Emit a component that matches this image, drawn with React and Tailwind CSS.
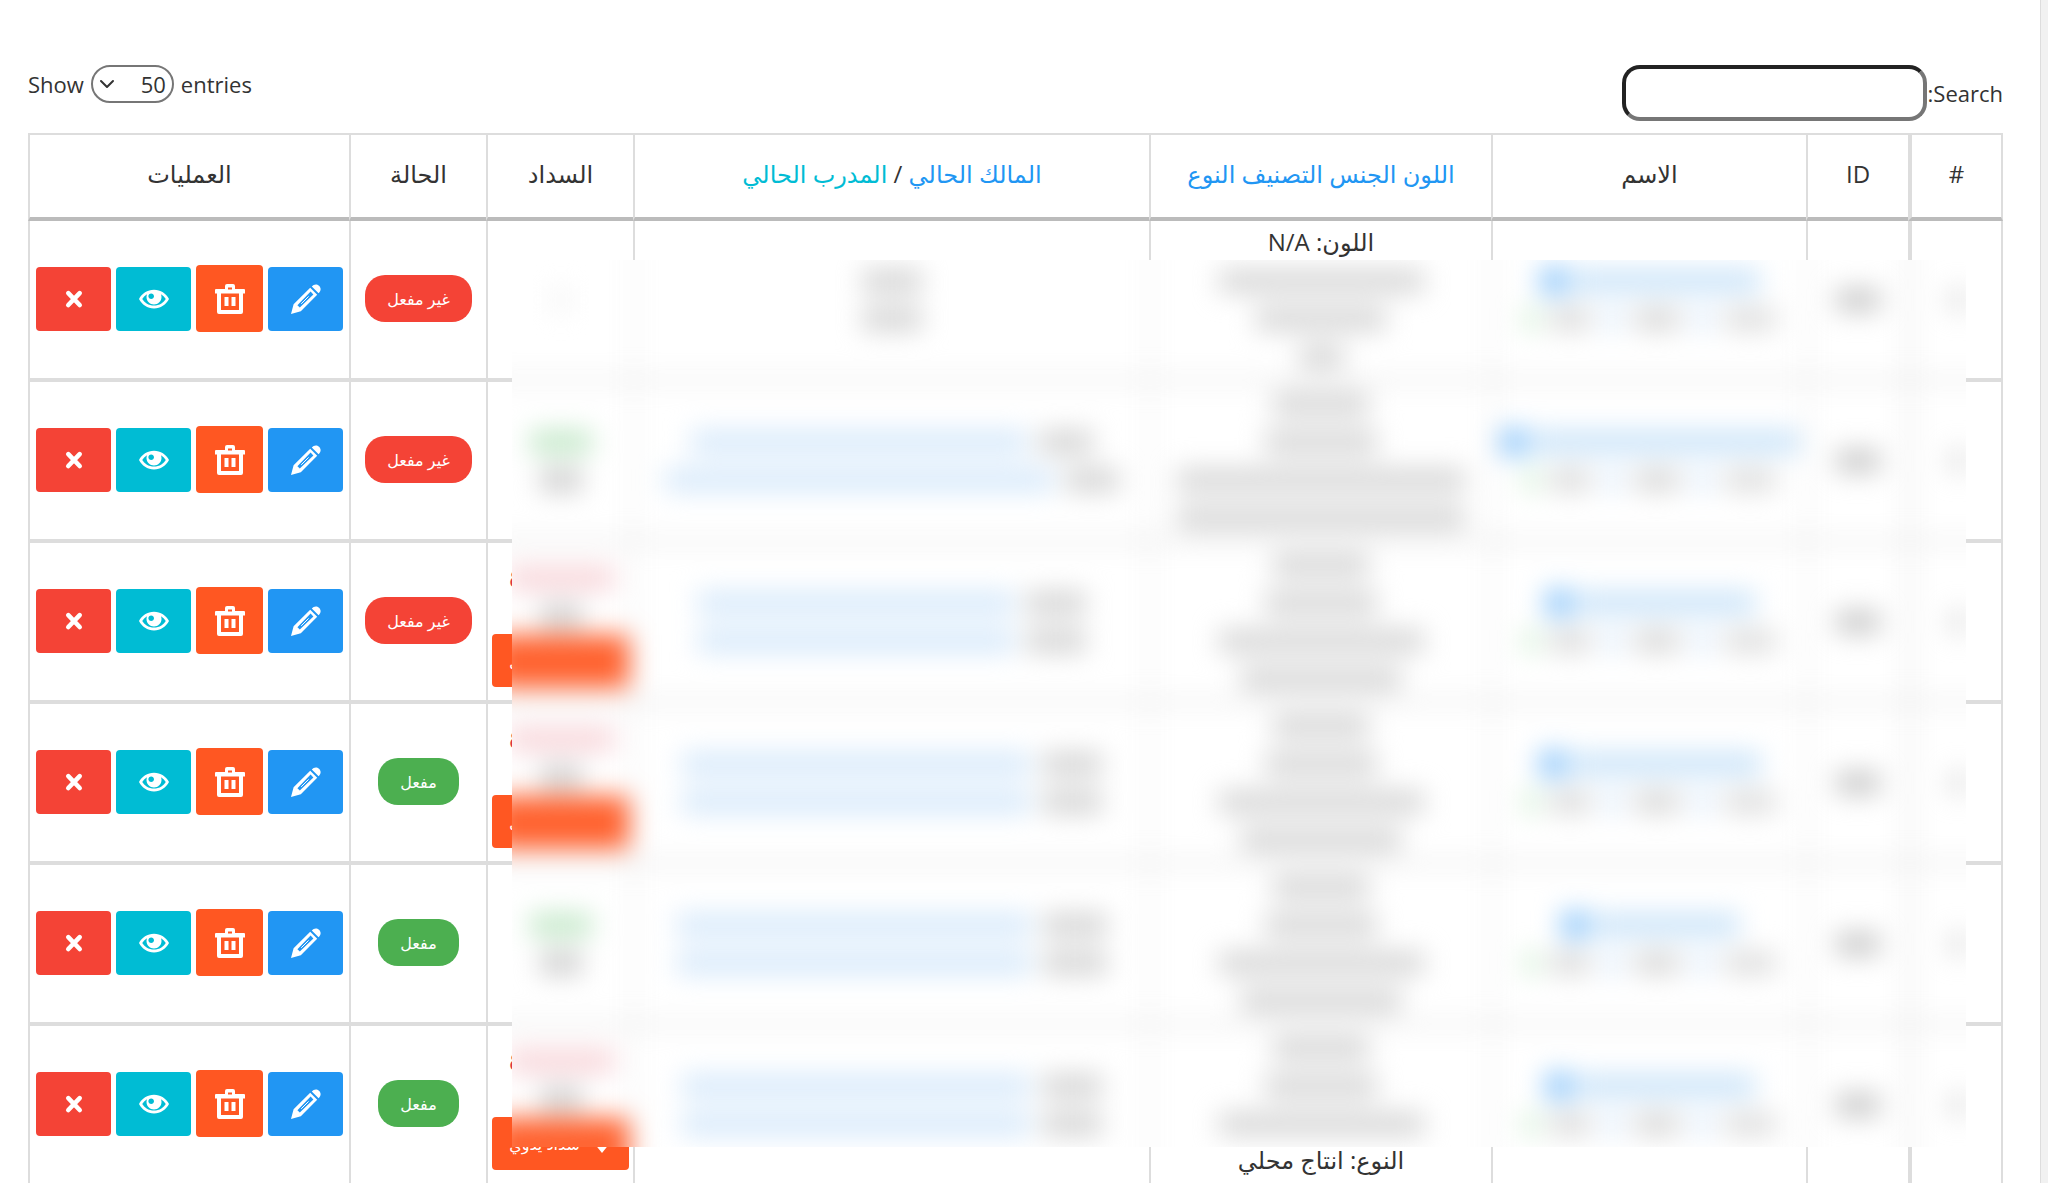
import { useState } from "react";
import { ChevronDown } from "lucide-react";


const ROWS = [
  {
    active: false,
    payment: "none",
    note: "اللون: N/A",
    name: 188,
    details: [0, 205, 130, 45],
    owner: [[60, 0], [60, 0]],
  },
  {
    active: false,
    payment: "paid",
    name: 268,
    details: [96, 112, 288, 288],
    owner: [[54, 336], [54, 388]],
  },
  {
    active: false,
    payment: "unpaid",
    name: 178,
    details: [96, 112, 205, 160],
    owner: [[60, 316], [60, 316]],
  },
  {
    active: true,
    payment: "unpaid",
    name: 190,
    details: [96, 112, 205, 160],
    owner: [[60, 348], [60, 348]],
  },
  {
    active: true,
    payment: "paid",
    name: 146,
    details: [96, 112, 205, 160],
    owner: [[64, 354], [64, 354]],
  },
  {
    active: true,
    payment: "unpaid",
    note: "النوع: انتاج محلي",
    noteAtEnd: true,
    name: 178,
    details: [96, 112, 205, 0],
    owner: [[60, 348], [60, 348]],
  },
];


const TH = "h-[88px] border-t-2 border-b-4 border-l-2 border-t-[#ddd] border-b-[#bbb] border-l-[#ddd] px-2 pb-1 text-center font-normal";

const TD = "h-[161px] border-b-4 border-l-2 border-[#ddd] p-0 pb-0.5 text-center";

const VEIL_CELL = "flex h-[161px] flex-col justify-center border-b-4 border-l-2 border-[#ddd]";


function PencilIcon() {
  return (
    <svg viewBox="0 0 30 30" className="size-[30px]" fill="currentColor" aria-hidden="true">
      <path d="M0 30 2.6 20.2 19.2 3.8 26.2 10.8 9.8 27.2ZM6.400 21.200 8.800 23.600 22.400 10.400 19.600 7.600Z" fillRule="evenodd" />
      <path d="M10.200 19.800 17.600 12.400" stroke="currentColor" strokeWidth="1" />
      <path d="M20.8 2.4C22.6.4 25.6-.6 28 1.8c2.4 2.4 2 5.2-.4 7.4Z" />
    </svg>
  );
}


function TrashIcon() {
  return (
    <svg viewBox="0 0 30 30" className="size-[30px]" fill="currentColor" aria-hidden="true">
      <path d="M10 5V2a2 2 0 0 1 2-2h6a2 2 0 0 1 2 2v3h9a1 1 0 0 1 1 1v3.400h-2V28a2 2 0 0 1-2 2H4a2 2 0 0 1-2-2V9.400H0V6a1 1 0 0 1 1-1ZM13 3.400V5.400h4V3.400ZM6 9.400V26h18V9.400Z" fillRule="evenodd" />
      <path d="M9.500 13h4v9h-4ZM16.500 13h4v9h-4Z" />
    </svg>
  );
}


function EyeIcon() {
  return (
    <svg viewBox="0 0 16 16" className="size-[30px]" fill="currentColor" aria-hidden="true">
      <path d="M8 3c-3.489 0-6.514 2.032-8 5 1.486 2.968 4.511 5 8 5s6.514-2.032 8-5c-1.486-2.968-4.511-5-8-5zM11.945 5.652c0.940 0.600 1.737 1.403 2.335 2.348-0.598 0.946-1.395 1.749-2.335 2.348-1.181 0.753-2.545 1.152-3.944 1.152s-2.763-0.398-3.945-1.152c-0.940-0.600-1.737-1.403-2.335-2.348 0.598-0.946 1.395-1.749 2.335-2.348 0.061-0.039 0.123-0.077 0.185-0.114-0.156 0.427-0.241 0.888-0.241 1.369 0 2.209 1.791 4 4 4s4-1.791 4-4c0-0.481-0.085-0.942-0.241-1.369 0.062 0.037 0.124 0.075 0.185 0.114zM8 6.500c0 0.828-0.672 1.500-1.500 1.500s-1.500-0.672-1.500-1.500 0.672-1.500 1.500-1.500 1.500 0.672 1.500 1.500z" />
    </svg>
  );
}


function CrossIcon() {
  return (
    <svg viewBox="0 0 30 30" className="size-[30px]" fill="none" stroke="currentColor" strokeWidth="4.600" strokeLinecap="round" aria-hidden="true">
      <path d="M9.300 9.200 20.700 21M20.700 9.200 9.300 21" />
    </svg>
  );
}


// Stand-in for a private value
function Bar({ width, className }) {
  return (
    <span
      className={`block h-6 shrink-0 ${className}`}
      style={{ width }}
    />
  );
}


function Line({ children }) {
  return (
    <div className="flex h-[38px] items-center justify-center gap-3">
      {children}
    </div>
  );
}


function VeilPayment({ status }) {

  if (status === "none") {
    return (
      <Line>
        <Bar width={12} className="bg-[#eee]" />
      </Line>
    );
  }

  if (status === "paid") {
    return (
      <>
        <Line>
          <Bar width={62} className="bg-[#c6e9cb]" />
        </Line>
        <Line>
          <Bar width={42} className="bg-[#d0d0d0]" />
        </Line>
      </>
    );
  }

  return (
    <div className="pt-1">
      <Line>
        <Bar width={106} className="bg-[#f8d6da]" />
      </Line>
      <Line>
        <Bar width={42} className="bg-[#d0d0d0]" />
      </Line>
      <div className="mx-1 h-[53px] bg-[#ff622f]" />
    </div>
  );

}


function VeilRow({ row }) {
  return (
    <>

      <div className={`${VEIL_CELL} border-l-4`}>
        <Line>
          <Bar width={14} className="bg-[#d8d8d8]" />
        </Line>
      </div>

      <div className={VEIL_CELL}>
        <Line>
          <Bar width={44} className="bg-[#cccccc]" />
        </Line>
      </div>

      <div className={VEIL_CELL}>
        <Line>
          <span className="flex items-center gap-1">
            <Bar width={row.name} className="bg-[#cde5f9]" />
            <span className="block size-7 bg-[#98ccfb]" />
          </span>
        </Line>
        <Line>
          <Bar width={52} className="bg-[#e0e0e0]" />
          <Bar width={20} className="bg-[#e3effc]" />
          <Bar width={46} className="bg-[#dbdbdb]" />
          <Bar width={20} className="bg-[#e3effc]" />
          <Bar width={40} className="bg-[#dddddd]" />
          <Bar width={14} className="bg-[#d2f0d5]" />
        </Line>
      </div>

      <div className={VEIL_CELL}>
        {row.details.map((width, i) => (
          <Line key={i}>
            <Bar width={width} className="bg-[#d8d8d8]" />
          </Line>
        ))}
      </div>

      <div className={VEIL_CELL}>
        {row.owner.map(([label, value], i) => (
          <Line key={i}>
            <Bar width={label} className="bg-[#d6d6d6]" />
            {value > 0 && <Bar width={value} className="bg-[#d8eafb]" />}
          </Line>
        ))}
      </div>

      <div className={VEIL_CELL}>
        <VeilPayment status={row.payment} />
      </div>

    </>
  );
}


function Row({ row }) {
  return (
    <tr>

      <td className={`${TD} border-r-2 border-l-4`} />
      <td className={TD} />
      <td className={TD} />

      <td className={`${TD} leading-[38px] ${row.noteAtEnd ? "align-bottom" : "align-top"}`}>
        {row.note && <div className="py-0.5">{row.note}</div>}
      </td>

      <td className={TD} />

      <td className={TD}>
        {row.payment === "unpaid" && (
          <div className="flex flex-col">
            <span className="h-20 whitespace-nowrap leading-[38px] text-[#dc3545]">غير مدفوع</span>
            <button
              type="button"
              className="mx-1 flex h-[53px] items-center justify-center gap-3 rounded bg-[#ff5722] text-base text-white"
            >
              <svg viewBox="0 0 20 20" className="size-5" fill="currentColor" aria-hidden="true">
                <path d="M7 1h6v8h5l-8 10L2 9h5Z" />
              </svg>
              <span>سداد يدوي</span>
            </button>
          </div>
        )}
      </td>

      <td className={TD}>
        {row.active ? (
          <span className="inline-flex h-[47px] items-center rounded-[20px] bg-[#4caf50] px-[22px] text-base text-white">مفعل</span>
        ) : (
          <span className="inline-flex h-[47px] items-center rounded-[20px] bg-[#f44336] px-[22px] text-base text-white">غير مفعل</span>
        )}
      </td>

      <td className={TD}>
        <div className="flex items-center justify-center gap-[5px] text-white">
          <button type="button" aria-label="تعديل" className="flex h-16 w-[75px] items-center justify-center rounded bg-[#2196f3]">
            <PencilIcon />
          </button>
          <button type="button" aria-label="حذف" className="flex h-[67px] w-[67px] items-center justify-center rounded bg-[#ff5722]">
            <TrashIcon />
          </button>
          <button type="button" aria-label="عرض" className="flex h-16 w-[75px] items-center justify-center rounded bg-[#00bcd4]">
            <EyeIcon />
          </button>
          <button type="button" aria-label="إلغاء" className="flex h-16 w-[75px] items-center justify-center rounded bg-[#f44336]">
            <CrossIcon />
          </button>
        </div>
      </td>

    </tr>
  );
}


export default function App() {

  const [length, setLength] = useState("50");
  const [search, setSearch] = useState("");


  return (

    <div dir="rtl" className="h-screen overflow-hidden bg-[#f1f1f1] pr-[7px] font-['Open_Sans','DejaVu_Sans',sans-serif] text-[22px] text-[#333]">

      <main className="min-h-full border-r border-[#ddd] bg-white pt-[65px] pr-[37px] pl-7">


        {/* Toolbar */}
        <div className="mb-3 flex items-start justify-between">

          <label className="flex items-center gap-px">
            <span>Search:</span>
            <input
              type="text"
              value={search}
              onChange={(e) => setSearch(e.target.value)}
              className="h-14 w-[305px] rounded-[18px] border-4 border-t-[#222] border-r-[#767676] border-b-[#767676] border-l-[#222] px-3 outline-none"
            />
          </label>


          <label dir="ltr" className="flex items-center gap-[7px]">
            <span>Show</span>
            <span className="relative">
              <select
                dir="rtl"
                value={length}
                onChange={(e) => setLength(e.target.value)}
                className="block h-[38px] w-[83px] appearance-none rounded-[19px] border-2 border-[#767676] bg-white pr-1.5 leading-none"
              >
                <option value="10">10</option>
                <option value="25">25</option>
                <option value="50">50</option>
                <option value="100">100</option>
              </select>
              <ChevronDown size={24} strokeWidth={2} className="pointer-events-none absolute top-[7px] left-1" />
            </span>
            <span>entries</span>
          </label>

        </div>


        <div className="relative">

          <table className="w-full table-fixed border-separate border-spacing-0 text-2xl">

            <colgroup>
              <col className="w-[95px]" />
              <col className="w-[102px]" />
              <col className="w-[315px]" />
              <col className="w-[342px]" />
              <col />
              <col className="w-[147px]" />
              <col className="w-[137px]" />
              <col className="w-[321px]" />
            </colgroup>

            <thead>
              <tr>
                <th className={`${TH} border-r-2 border-l-4 border-r-[#ddd]`}>#</th>
                <th className={TH}>ID</th>
                <th className={TH}>الاسم</th>
                <th className={`${TH} text-[#2196f3]`}>اللون الجنس التصنيف النوع</th>
                <th className={TH}>
                  <span className="text-[#2196f3]">المالك الحالي</span>
                  {" / "}
                  <span className="text-[#00bcd4]">المدرب الحالي</span>
                </th>
                <th className={TH}>السداد</th>
                <th className={TH}>الحالة</th>
                <th className={TH}>العمليات</th>
              </tr>
            </thead>

            <tbody>
              {ROWS.map((row, i) => (
                <Row key={i} row={row} />
              ))}
            </tbody>

          </table>


          {/* Privacy veil over the record data */}
          <div
            aria-hidden="true"
            className="pointer-events-none absolute top-[127px] right-[37px] left-[484px] h-[887px] overflow-hidden bg-white"
          >
            <div className="-mt-[39px] -mr-[37px] -ml-[26px] grid grid-cols-[95px_102px_315px_342px_1fr_147px] blur-[13px]">
              {ROWS.map((row, i) => (
                <VeilRow key={i} row={row} />
              ))}
            </div>
          </div>

        </div>


      </main>


    </div>

  );

}
